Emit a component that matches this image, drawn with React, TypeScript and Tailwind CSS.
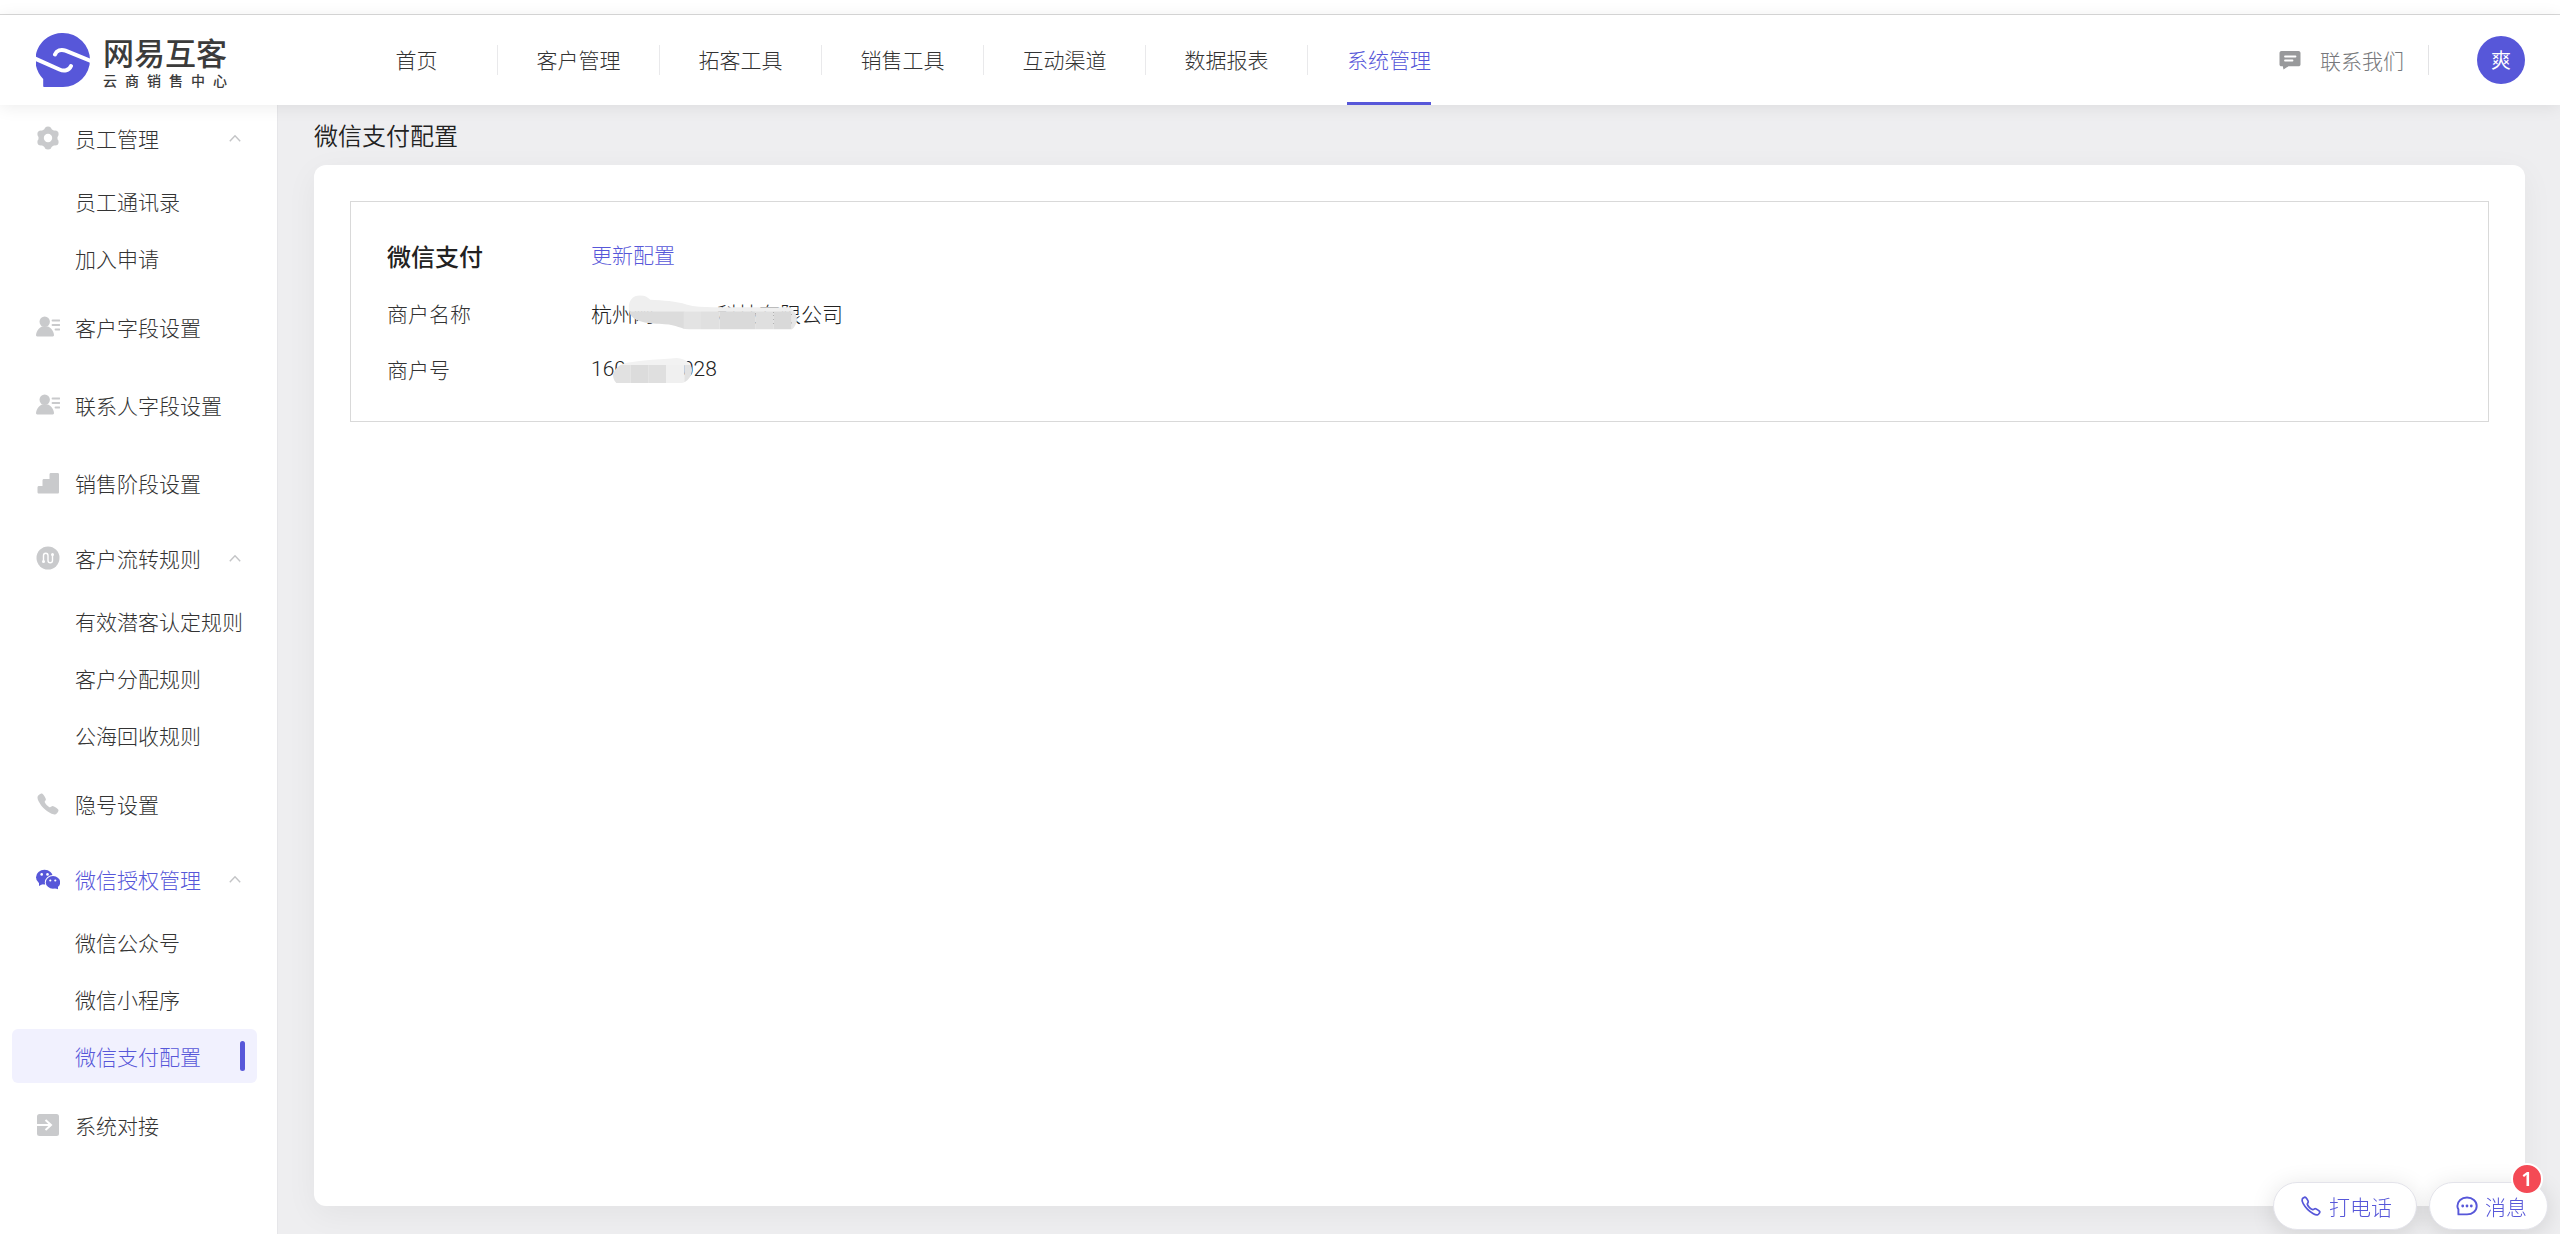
import { ReactNode } from 'react';
import clsx from 'clsx';
import { IoCall, IoCallOutline } from 'react-icons/io5';

interface IMenuItem {
  label: string;
  icon: ReactNode;
  active?: boolean;
  children?: string[];
}

function Logo() {
  return (
    <svg viewBox="0 0 54 54" className="size-[54px]" aria-hidden>
      <path
        d="M27 0a27 27 0 0 1 0 54H8c-.5 0-.8-.3-.8-.8V46A27 27 0 0 1 27 0z"
        fill="#5757d9"
      />
      <path
        d="M19 21.500c1.500-4 6-5.500 10.500-3.800L55 28M-1 25.500l24.500 11c4.500 2 9.500 1.200 11.500-3.500"
        fill="none"
        stroke="#fff"
        strokeWidth="4"
        strokeLinecap="round"
      />
    </svg>
  );
}

function GearIcon() {
  return (
    <svg viewBox="0 0 24 24" className="size-6" fill="currentColor" aria-hidden>
      <circle cx="12" cy="12" r="9.600" />
      <circle cx="12" cy="4" r="3.600" />
      <circle cx="12" cy="20" r="3.600" />
      <circle cx="5" cy="8" r="3.600" />
      <circle cx="19" cy="8" r="3.600" />
      <circle cx="5" cy="16" r="3.600" />
      <circle cx="19" cy="16" r="3.600" />
      <circle cx="12" cy="12" r="4.200" fill="#fff" />
    </svg>
  );
}

function PersonIcon() {
  return (
    <svg viewBox="0 0 24 24" className="size-6" aria-hidden>
      <circle cx="8.700" cy="6.800" r="5.200" fill="currentColor" />
      <path
        d="M0 20.100C.4 15.500 3.400 12.900 6 11.500h6c2.600 1.400 5.600 4 6 8.600 0 .9-.4 1.400-1.200 1.400H1.200C.4 21.500 0 21 0 20.100z"
        fill="currentColor"
      />
      <path
        d="M16.500 5.500h7M16.500 10h7M19.500 14.500h4"
        stroke="currentColor"
        strokeWidth="1.800"
        strokeLinecap="round"
      />
    </svg>
  );
}

function StairsIcon() {
  return (
    <svg viewBox="0 0 24 24" className="size-6" fill="currentColor" aria-hidden>
      <path d="M15 2h6.500c1 0 1.500.5 1.500 1.500v17.500c0 1-.5 1.500-1.500 1.500h-18.500c-1 0-1.500-.5-1.500-1.500v-4.500c0-1 .5-1.500 1.500-1.500h3.500v-5.500c0-1 .5-1.500 1.500-1.500h5.500V3.500c0-1 .5-1.500 1.500-1.500z" />
    </svg>
  );
}

function FlowIcon() {
  return (
    <svg viewBox="0 0 24 24" className="size-6" fill="none" aria-hidden>
      <circle cx="12" cy="12" r="11.500" fill="currentColor" />
      <path
        d="M7.500 15.500V9.500a2.250 2.250 0 0 1 4.500 0v5a2.250 2.250 0 0 0 4.500 0V8.500"
        stroke="#fff"
        strokeWidth="1.400"
      />
      <circle cx="7.500" cy="15.500" r="1.500" fill="#fff" />
      <circle cx="16.500" cy="8.500" r="1.500" fill="#fff" />
    </svg>
  );
}

function WechatIcon() {
  return (
    <svg viewBox="0 0 24 24" className="size-6" fill="currentColor" aria-hidden>
      <ellipse cx="8.500" cy="10.200" rx="8.500" ry="7.400" />
      <path d="M3 14l0 5 4.500-2.500z" />
      <ellipse cx="17" cy="15.400" rx="8.200" ry="7.400" fill="#fff" />
      <ellipse cx="17" cy="15.400" rx="7.200" ry="6.300" />
      <path d="M18 21l4 1.200v-4z" />
      <g fill="#fff">
        <circle cx="5.700" cy="7.400" r="1.300" />
        <circle cx="11.500" cy="7.400" r="1.300" />
        <circle cx="14.300" cy="13.500" r="1.100" />
        <circle cx="19.300" cy="13.500" r="1.100" />
      </g>
    </svg>
  );
}

function ConnectIcon() {
  return (
    <svg viewBox="0 0 24 24" className="size-6" fill="none" aria-hidden>
      <rect x="1" y="1" width="22" height="22" rx="2.500" fill="currentColor" />
      <path
        d="M1 12h13.500M9.500 7l5.500 5-5.500 5"
        stroke="#fff"
        strokeWidth="2"
      />
    </svg>
  );
}

function ChevronUp() {
  return (
    <svg
      viewBox="0 0 12 12"
      className="size-3 text-[#c3c4c6]"
      fill="none"
      aria-hidden
    >
      <path d="M.8 9.200L6 3.700l5.200 5.500" stroke="currentColor" strokeWidth="1.400" />
    </svg>
  );
}

function FeedbackIcon() {
  return (
    <svg viewBox="0 0 22 20" className="w-[22px] h-5" fill="none" aria-hidden>
      <path
        d="M2.500 1h17c1 0 2 .8 2 2v11.500c0 1-.9 1.800-2 1.800H9.500L4.500 19.500 3.800 16.300H2.500c-1.200 0-2-.8-2-1.800V3c0-1.200.9-2 2-2z"
        fill="#98999b"
      />
      <path
        d="M6 6.500h10.500M6 10.500h7.500"
        stroke="#fff"
        strokeWidth="1.800"
        strokeLinecap="round"
      />
    </svg>
  );
}

function MessageIcon() {
  return (
    <svg viewBox="0 0 22 22" className="size-[22px]" fill="none" aria-hidden>
      <path
        d="M11 2.500c5.500 0 9.700 3.700 9.700 8.500s-4.200 8.400-9.700 8.400H2.400v-5c-.7-1-1-2.100-1-3.400C1.400 6.200 5.500 2.500 11 2.500z"
        stroke="currentColor"
        strokeWidth="1.900"
        strokeLinejoin="round"
      />
      <circle cx="6.700" cy="11" r="1.400" fill="currentColor" />
      <circle cx="11" cy="11" r="1.400" fill="currentColor" />
      <circle cx="15.300" cy="11" r="1.400" fill="currentColor" />
    </svg>
  );
}

function NameMask() {
  return (
    <svg
      viewBox="148 44 504 104"
      className="absolute left-[38px] top-[10px] w-[168px] h-[35px]"
      aria-hidden
    >
      <clipPath id="name-mask">
        <path d="M148 88C144 62 160 44 180 44C195 44 204 50 212 58C250 60 290 62 320 72C345 79 370 80 400 80H630C645 88 652 104 652 120C650 132 644 142 636 147H330C305 146 290 132 255 131C215 130 150 128 148 88z" />
      </clipPath>
      <g clipPath="url(#name-mask)">
        <rect x="144" y="44" width="510" height="50" fill="#efefef" />
        <rect x="144" y="93" width="170" height="56" fill="#dcdcdc" />
        <rect x="312" y="93" width="52" height="56" fill="#e3e3e3" />
        <rect x="364" y="93" width="56" height="56" fill="#e0e0e0" />
        <rect x="420" y="93" width="108" height="56" fill="#dadada" />
        <rect x="528" y="93" width="54" height="56" fill="#dfdfdf" />
        <rect x="582" y="93" width="54" height="56" fill="#d9d9d9" />
        <rect x="636" y="93" width="20" height="56" fill="#e6e6e6" />
      </g>
    </svg>
  );
}

function NumberMask() {
  return (
    <svg
      viewBox="98 234 237 75"
      className="absolute left-[22px] top-[17px] w-[79px] h-[25px]"
      aria-hidden
    >
      <clipPath id="number-mask">
        <path d="M98 284C102 268 116 252 140 248C190 240 240 238 290 234C315 236 335 250 335 270C335 290 320 306 305 309H108C100 300 98 292 98 284z" />
      </clipPath>
      <g clipPath="url(#number-mask)">
        <rect x="98" y="234" width="237" height="22" fill="#f2f2f2" />
        <rect x="98" y="255" width="53" height="54" fill="#e1e1e1" />
        <rect x="151" y="255" width="54" height="54" fill="#dcdcdc" />
        <rect x="205" y="255" width="52" height="54" fill="#dfdfdf" />
        <rect x="257" y="255" width="55" height="54" fill="#f0f0f0" />
        <rect x="312" y="255" width="23" height="54" fill="#e2e2e2" />
      </g>
    </svg>
  );
}

const NAV = [
  '首页',
  '客户管理',
  '拓客工具',
  '销售工具',
  '互动渠道',
  '数据报表',
  '系统管理',
];

const ACTIVE_NAV = '系统管理';
const ACTIVE_PAGE = '微信支付配置';

const MENU: IMenuItem[] = [
  {
    label: '员工管理',
    icon: <GearIcon />,
    children: ['员工通讯录', '加入申请'],
  },
  { label: '客户字段设置', icon: <PersonIcon /> },
  { label: '联系人字段设置', icon: <PersonIcon /> },
  { label: '销售阶段设置', icon: <StairsIcon /> },
  {
    label: '客户流转规则',
    icon: <FlowIcon />,
    children: ['有效潜客认定规则', '客户分配规则', '公海回收规则'],
  },
  { label: '隐号设置', icon: <IoCall className="size-6" /> },
  {
    label: '微信授权管理',
    icon: <WechatIcon />,
    active: true,
    children: ['微信公众号', '微信小程序', '微信支付配置'],
  },
  { label: '系统对接', icon: <ConnectIcon /> },
];

function Header() {
  return (
    <header className="relative z-10 flex items-center h-[90px] pl-9 pr-[35px] bg-white shadow-[0_2px_16px_rgba(0,0,0,0.08)]">
      <a href="#" className="flex items-center gap-[13px] w-[300px]">
        <Logo />
        <span className="flex flex-col w-[124px] whitespace-nowrap text-[#3b3b3b]">
          <span className="text-[31px] leading-10 font-medium">网易互客</span>
          <span className="flex justify-between text-sm leading-4 font-medium">
            {'云商销售中心'.split('').map((char) => (
              <span key={char}>{char}</span>
            ))}
          </span>
        </span>
      </a>
      <nav className="flex h-full">
        {NAV.map((item, index) => (
          <div key={item} className="flex items-center w-[162px]">
            <a
              href="#"
              className={clsx(
                'flex items-center h-full mx-auto border-b-3',
                item === ACTIVE_NAV
                  ? 'border-[#5757d9] text-[#5757d9]'
                  : 'border-transparent',
              )}
            >
              {item}
            </a>
            {index < NAV.length - 1 && (
              <span className="w-px h-[30px] bg-[#e9e9eb]" />
            )}
          </div>
        ))}
      </nav>
      <div className="flex items-center ml-auto">
        <a href="#" className="flex items-center gap-[19px] text-[#77787b]">
          <FeedbackIcon />
          联系我们
        </a>
        <span className="w-px h-[30px] ml-6 mr-12 bg-[#e3e3e5]" />
        <button
          type="button"
          className="size-12 rounded-full bg-[#5757d9] text-white text-[20px] font-[350]"
        >
          爽
        </button>
      </div>
    </header>
  );
}

function Sidebar() {
  return (
    <aside className="w-[278px] shrink-0 bg-white border-r border-[#e6e6e9]">
      <ul className="-mt-[3px]">
        {MENU.map(({ label, icon, active, children }) => (
          <li key={label}>
            <a
              href="#"
              className={clsx(
                'flex items-center px-9',
                children ? 'h-[72px]' : 'h-[78px]',
                active && 'text-[#5757d9]',
              )}
            >
              <span
                className={clsx(
                  'mr-[15px]',
                  active ? 'text-[#5757d9]' : 'text-[#c9cacc]',
                )}
              >
                {icon}
              </span>
              <span className="mr-auto">{label}</span>
              {children && <ChevronUp />}
            </a>
            {children && (
              <ul className="ml-3 mr-5">
                {children.map((child) => (
                  <li key={child} className="pb-[3px]">
                    <a
                      href="#"
                      className={clsx(
                        'flex items-center h-[54px] pl-[63px] rounded-md whitespace-nowrap',
                        child === ACTIVE_PAGE && 'bg-[#f1f1fe] text-[#5757d9]',
                      )}
                    >
                      {child}
                      {child === ACTIVE_PAGE && (
                        <span className="w-[5px] h-[30px] ml-auto mr-3 rounded-sm bg-[#5757d9]" />
                      )}
                    </a>
                  </li>
                ))}
              </ul>
            )}
          </li>
        ))}
      </ul>
    </aside>
  );
}

function PaymentConfig() {
  return (
    <section className="border border-[#d9d9d9] px-9 py-6">
      <div className="flex items-center h-[59px]">
        <h2 className="w-[204px] text-2xl font-medium text-[#222]">微信支付</h2>
        <a href="#" className="pb-1 text-[#5757d9]">
          更新配置
        </a>
      </div>
      <dl>
        <div className="flex items-center h-14">
          <dt className="w-[204px]">商户名称</dt>
          <dd className="relative flex items-center h-full text-[#222]">
            杭州网
            <span className="w-[63px]" />
            科技有限公司
            <NameMask />
          </dd>
        </div>
        <div className="flex items-center h-14">
          <dt className="w-[204px]">商户号</dt>
          <dd className="relative flex items-center h-full text-[#222] font-['Roboto',sans-serif]">
            160
            <span className="w-14" />
            028
            <NumberMask />
          </dd>
        </div>
      </dl>
    </section>
  );
}

function FloatingActions() {
  const pill =
    'relative flex items-center gap-[7px] h-12 pl-[26px] rounded-full bg-white border border-[#e3e3ea] text-[#5757d9] shadow-[0_4px_24px_rgba(0,0,0,0.12)]';
  return (
    <div className="fixed right-3 bottom-1 z-20 flex gap-3">
      <button type="button" className={clsx(pill, 'pr-6')}>
        <IoCallOutline className="size-[22px] [&_path]:[stroke-width:40]" />
        打电话
      </button>
      <button type="button" className={clsx(pill, 'pr-5')}>
        <MessageIcon />
        消息
        <span className="absolute -top-5 right-1 flex items-center justify-center size-8 rounded-full border-2 border-white bg-[#f44a55] text-white text-[20px] font-semibold font-['Noto_Sans',sans-serif]">
          1
        </span>
      </button>
    </div>
  );
}

export default function App() {
  return (
    <div className="flex flex-col min-h-screen pt-[14px] bg-white text-[21px] leading-8 font-light text-[#333] font-['Noto_Sans_CJK_SC',sans-serif]">
      <div className="flex flex-col flex-1 border-t border-[#d9d9d9]">
        <Header />
        <div className="flex flex-1">
          <Sidebar />
          <main className="flex flex-col flex-1 pl-9 pr-[35px] pb-7 bg-[#eeeef0]">
            <h1 className="flex items-center h-[60px] text-2xl font-[350] text-[#222]">
              微信支付配置
            </h1>
            <div className="flex-1 p-9 rounded-xl bg-white shadow-[0_8px_32px_rgba(0,0,0,0.05)]">
              <PaymentConfig />
            </div>
          </main>
        </div>
      </div>
      <FloatingActions />
    </div>
  );
}
